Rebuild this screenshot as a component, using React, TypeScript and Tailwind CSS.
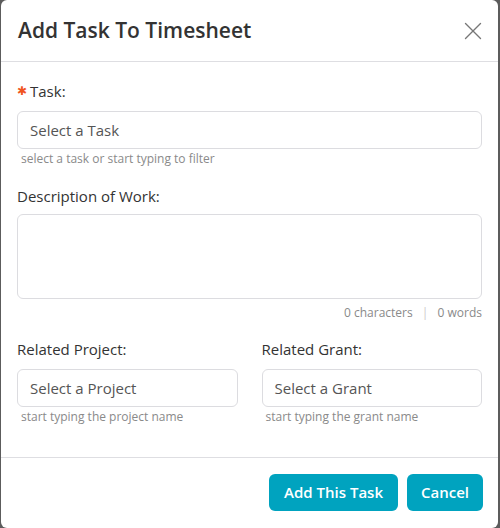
import { X } from "lucide-react";

function Field({
  label,
  placeholder,
  hint,
  required,
}: {
  label: string;
  placeholder: string;
  hint: string;
  required?: boolean;
}) {
  return (
    <div className="flex flex-col">
      <label className="flex items-center h-[20px] text-[15px] text-[#333]">
        {required && <span className="text-[#f0541e] text-[12px] leading-none mr-[3px]">✱</span>}
        {label}
      </label>
      <div className="mt-[10px] h-[38px] rounded-[6px] border border-[#dcdce0] bg-white flex items-center px-[12px] text-[15px] text-[#555]">
        {placeholder}
      </div>
      <p className="mt-[2px] pl-[4px] text-[12px] leading-[16px] text-[#8a8a8a]">{hint}</p>
    </div>
  );
}

export default function App() {
  return (
    <div className="h-[528px] w-[500px] bg-[#5c5c5c] font-['Open_Sans','Lato',sans-serif]">
      <div className="ml-[1px] w-[497px] h-[528px] bg-white rounded-[6px] flex flex-col">
        {/* HEADER */}
        <div className="h-[62px] flex items-center justify-between pl-[17px] pr-[10px] border-b border-[#dedee2]">
          <h2 className="text-[21px] font-semibold text-[#333]">Add Task To Timesheet</h2>
          <X className="w-[30px] h-[30px] text-[#777]" strokeWidth={1.1} />
        </div>

        {/* BODY */}
        <div className="flex-1 px-[16px] pt-[19px]">
          <Field
            required
            label="Task:"
            placeholder="Select a Task"
            hint="select a task or start typing to filter"
          />

          <div className="mt-[18px] flex flex-col">
            <label className="h-[20px] text-[15px] text-[#333]">Description of Work:</label>
            <div className="mt-[9px] h-[85px] rounded-[6px] border border-[#dcdce0]" />
            <p className="mt-[5px] text-right text-[12px] text-[#8a8a8a]">
              0 characters <span className="mx-[6px] text-[#ccc]">|</span> 0 words
            </p>
          </div>

          <div className="mt-[17px] grid grid-cols-2 gap-[24px]">
            <Field
              label="Related Project:"
              placeholder="Select a Project"
              hint="start typing the project name"
            />
            <Field
              label="Related Grant:"
              placeholder="Select a Grant"
              hint="start typing the grant name"
            />
          </div>
        </div>

        {/* FOOTER */}
        <div className="h-[71px] border-t border-[#dedee2] flex items-center justify-end gap-[9px] pr-[15px] pb-[1px]">
          <button className="h-[37px] px-[15px] rounded-[6px] bg-[#00a3bf] text-white text-[15px] font-semibold">
            Add This Task
          </button>
          <button className="h-[37px] px-[14px] rounded-[6px] bg-[#00a3bf] text-white text-[15px] font-semibold">
            Cancel
          </button>
        </div>
      </div>
    </div>
  );
}
